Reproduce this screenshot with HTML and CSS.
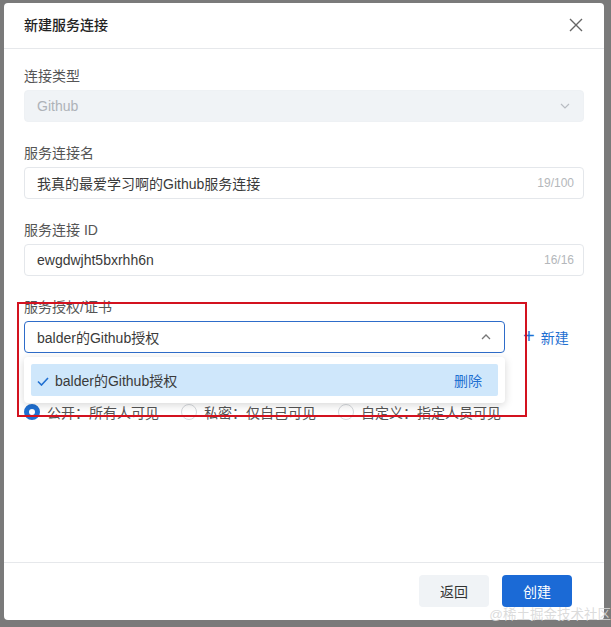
FILE: index.html
```html
<!DOCTYPE html>
<html lang="zh-CN">
<head>
<meta charset="utf-8">
<title>新建服务连接</title>
<link rel="stylesheet" href="styles.css">
</head>
<body>
<div class="modal">
  <header class="modal-header">
    <h2 class="modal-title">新建服务连接</h2>
    <button class="close-btn" aria-label="关闭">
      <svg width="14" height="14" viewBox="0 0 14 14"><path d="M1 1L13 13M13 1L1 13" stroke="#666" stroke-width="1.4" fill="none"/></svg>
    </button>
  </header>
  <div class="modal-body">
    <div class="field">
      <div class="label">连接类型</div>
      <div class="control disabled">
        <span class="value">Github</span>
        <svg class="chev" width="10" height="6" viewBox="0 0 10 6"><path d="M1 1L5 5L9 1" stroke="#b8bcc2" stroke-width="1.2" fill="none"/></svg>
      </div>
    </div>
    <div class="field">
      <div class="label">服务连接名</div>
      <div class="control">
        <span class="value">我真的最爱学习啊的Github服务连接</span>
        <span class="count">19/100</span>
      </div>
    </div>
    <div class="field">
      <div class="label">服务连接 ID</div>
      <div class="control">
        <span class="value">ewgdwjht5bxrhh6n</span>
        <span class="count">16/16</span>
      </div>
    </div>
    <div class="field">
      <div class="label">服务授权/证书</div>
      <div class="select-row">
        <div class="select-wrap">
          <div class="control focused">
            <span class="value">balder的Github授权</span>
            <svg class="chev" width="10" height="6" viewBox="0 0 10 6"><path d="M1 5L5 1L9 5" stroke="#777" stroke-width="1.3" fill="none"/></svg>
          </div>
          <div class="dropdown">
            <div class="option selected">
              <svg class="check" width="12" height="9" viewBox="0 0 12 9"><path d="M1 4.5L4.5 8L11 1" stroke="#1f6fd1" stroke-width="1.6" fill="none"/></svg>
              <span class="opt-text">balder的Github授权</span>
              <span class="opt-del">删除</span>
            </div>
          </div>
        </div>
        <a class="new-link"><span class="plus">+</span>新建</a>
      </div>
    </div>
    <div class="field field-radios">
      <div class="radios">
        <label class="radio"><span class="dot checked"></span>公开：所有人可见</label>
        <label class="radio"><span class="dot"></span>私密：仅自己可见</label>
        <label class="radio"><span class="dot"></span>自定义：指定人员可见</label>
      </div>
    </div>
  </div>
  <footer class="modal-footer">
    <button class="btn btn-default">返回</button>
    <button class="btn btn-primary">创建</button>
  </footer>
</div>
<div class="annot"></div>
<div class="watermark">@稀土掘金技术社区</div>
</body>
</html>
```

FILE: styles.css
```css
* { box-sizing: border-box; }
html, body { margin: 0; }
body {
  width: 611px;
  height: 627px;
  overflow: hidden;
  background: #7a7a7a;
  padding: 3px 0 0 4px;
  font-family: "Liberation Sans", "Noto Sans CJK SC", sans-serif;
  font-size: 14px;
  color: #333;
  position: relative;
}
.modal {
  width: 600px;
  height: 617px;
  background: #fff;
  border-radius: 4px;
  display: flex;
  flex-direction: column;
}
.modal-header {
  height: 46px;
  border-bottom: 1px solid #e6e8eb;
  display: flex;
  align-items: center;
  justify-content: space-between;
  padding: 0 21px 1px 20px;
}
.modal-title {
  margin: 0;
  font-size: 14px;
  font-weight: 500;
  color: #222;
  line-height: 22px;
}
.close-btn {
  border: 0;
  background: none;
  padding: 0;
  width: 14px;
  height: 14px;
  display: flex;
}
.modal-body {
  flex: 1;
  padding: 16px 20px 0 20px;
}
.field { margin-bottom: 20px; }
.field-radios { padding-top: 25px; }
.label {
  line-height: 22px;
  height: 22px;
  margin-bottom: 3px;
  color: #555;
  font-size: 14px;
}
.control {
  height: 32px;
  border: 1px solid #e4e7eb;
  border-radius: 4px;
  display: flex;
  align-items: center;
  padding: 0 9px 0 12px;
  background: #fff;
}
.control .value { flex: 1; color: #3a3a3a; white-space: nowrap; }
.control.disabled { background: #f0f3f6; border-color: #eef1f4; padding-right: 13px; }
.control.disabled .value { color: #aeb2b8; }
.count { color: #b4b7bb; font-size: 12px; }
.control.focused { border-color: #2e6cc9; padding-right: 13px; }
.select-row { display: flex; align-items: center; }
.select-wrap { width: 481px; position: relative; }
.new-link {
  margin-left: 18px;
  color: #1f6fd1;
  display: flex;
  align-items: center;
  font-size: 14px;
}
.plus { font-size: 20px; font-weight: 300; margin-right: 6px; line-height: 20px; margin-top: -2px; }
.dropdown {
  position: absolute;
  left: 0;
  right: 0;
  top: 36px;
  background: #fff;
  border-radius: 4px;
  box-shadow: 0 2px 8px rgba(0,0,0,0.16);
  padding: 7px;
  z-index: 5;
}
.option {
  height: 32px;
  display: flex;
  align-items: center;
  padding: 0 16px 0 6px;
  border-radius: 2px;
}
.option.selected { background: #cfe7fb; }
.check { margin-right: 6px; margin-top: 3px; }
.opt-text { flex: 1; color: #3a3a3a; }
.opt-del { color: #1f6fd1; }
.radios { display: flex; align-items: center; height: 28px; }
.radio { display: flex; align-items: center; color: #555; margin-right: 22px; }
.dot {
  width: 16px;
  height: 16px;
  border-radius: 50%;
  border: 1px solid #d5d8dc;
  margin-right: 7px;
  background: #fff;
}
.dot.checked { border: 5px solid #1f6fd1; }
.modal-footer {
  height: 58px;
  border-top: 1px solid #e6e8eb;
  display: flex;
  align-items: center;
  justify-content: flex-end;
  gap: 13px;
  padding: 0 32px 1px 0;
}
.btn {
  width: 70px;
  height: 32px;
  border: 0;
  border-radius: 4px;
  font-family: inherit;
  font-size: 14px;
}
.btn-default { background: #f0f3f6; color: #333; }
.btn-primary { background: #1b6ad6; color: #fff; }
.annot {
  position: absolute;
  left: 17px;
  top: 302px;
  width: 510px;
  height: 115px;
  border: 2px solid #d3121f;
  z-index: 10;
}
.watermark {
  position: absolute;
  right: 0;
  top: 605px;
  font-size: 13.5px;
  line-height: 20px;
  color: rgba(215,215,215,0.9);
  white-space: nowrap;
}
```
